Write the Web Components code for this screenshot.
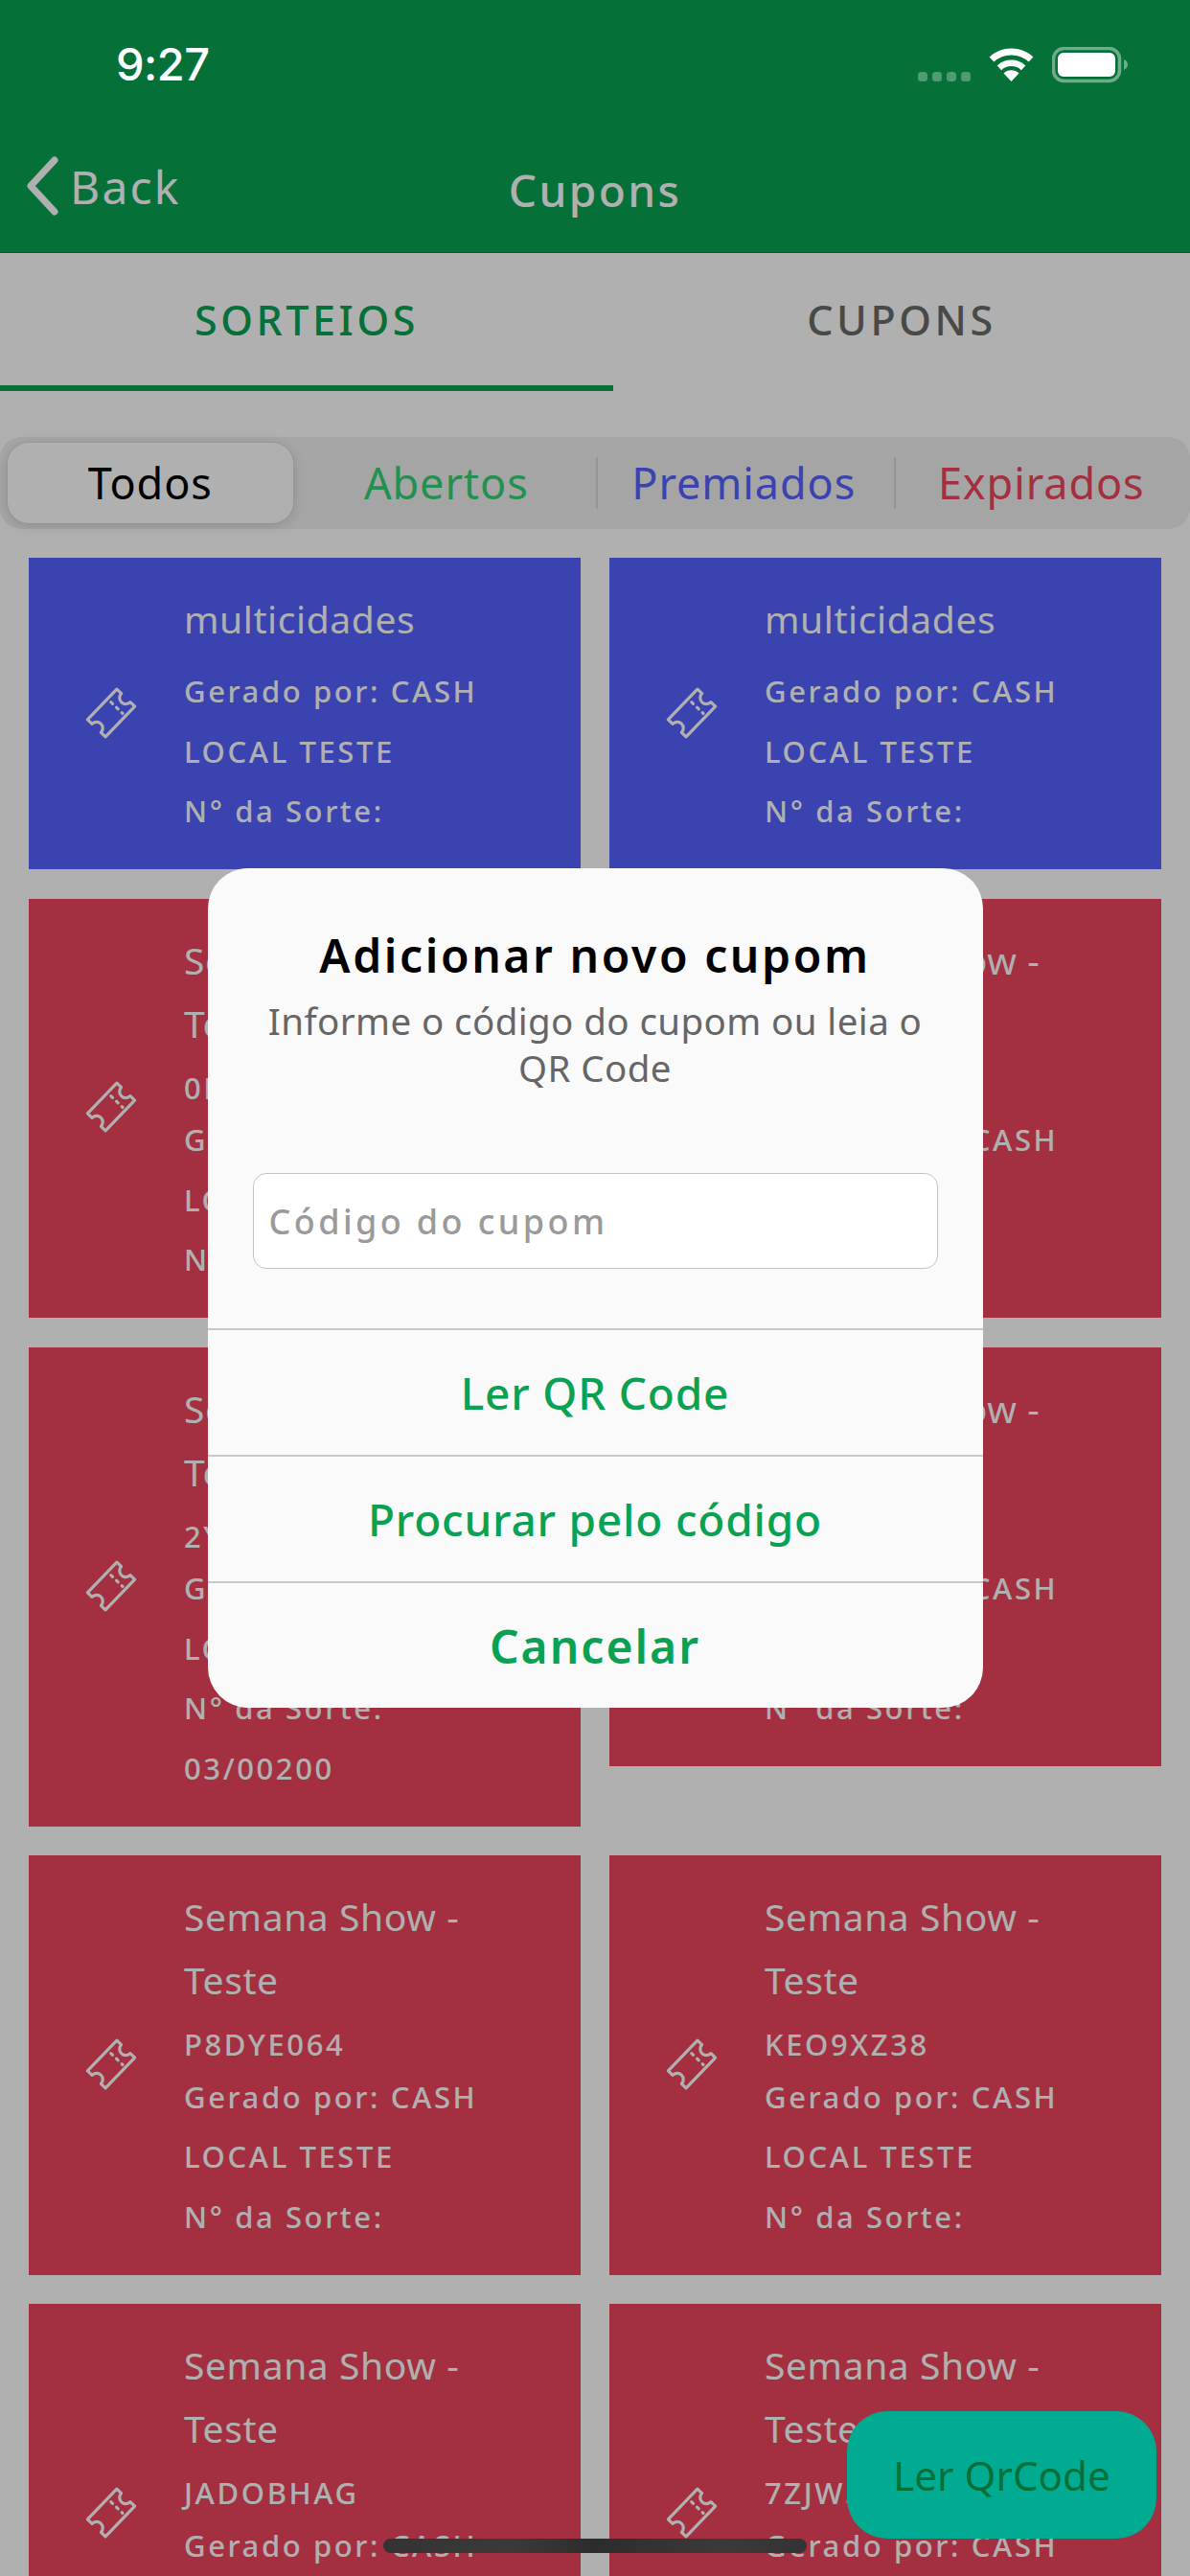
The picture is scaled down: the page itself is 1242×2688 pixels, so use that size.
<!DOCTYPE html>
<html lang="pt-BR">
<head>
<meta charset="utf-8">
<title>Cupons</title>
<style>
  html, body { margin: 0; padding: 0; background: #fff; }
  body { font-family: "Noto Sans", "Open Sans", sans-serif; }
</style>
</head>
<body>
<app-screen>
  <nav-header slot="top" title="Cupons"></nav-header>
  <top-tabs slot="top" first="SORTEIOS" second="CUPONS"></top-tabs>
  <seg-control slot="top"></seg-control>

  <card-grid slot="top">
    <coupon-card tone="blue"><span slot="title">multicidades</span><span>Gerado por: CASH</span><span>LOCAL TESTE</span><span>N° da Sorte:</span></coupon-card>
    <coupon-card tone="blue"><span slot="title">multicidades</span><span>Gerado por: CASH</span><span>LOCAL TESTE</span><span>N° da Sorte:</span></coupon-card>

    <coupon-card tone="red"><span slot="title">Semana Show - Teste</span><span slot="code">0K3FT7QA</span><span>Gerado por: CASH</span><span>LOCAL TESTE</span><span>N° da Sorte:</span></coupon-card>
    <coupon-card tone="red"><span slot="title">Semana Show - Teste</span><span slot="code">M4RT2WLC</span><span>Gerado por: CASH</span><span>LOCAL TESTE</span><span>N° da Sorte:</span></coupon-card>

    <coupon-card tone="red"><span slot="title">Semana Show - Teste</span><span slot="code">2YH8NC4D</span><span>Gerado por: CASH</span><span>LOCAL TESTE</span><span>N° da Sorte:</span><span>03/00200</span></coupon-card>
    <coupon-card tone="red"><span slot="title">Semana Show - Teste</span><span slot="code">B6SG1PVE</span><span>Gerado por: CASH</span><span>LOCAL TESTE</span><span>N° da Sorte:</span></coupon-card>

    <coupon-card tone="red"><span slot="title">Semana Show - Teste</span><span slot="code">P8DYE064</span><span>Gerado por: CASH</span><span>LOCAL TESTE</span><span>N° da Sorte:</span></coupon-card>
    <coupon-card tone="red"><span slot="title">Semana Show - Teste</span><span slot="code">KEO9XZ38</span><span>Gerado por: CASH</span><span>LOCAL TESTE</span><span>N° da Sorte:</span></coupon-card>

    <coupon-card tone="red"><span slot="title">Semana Show - Teste</span><span slot="code">JADOBHAG</span><span>Gerado por: CASH</span><span>LOCAL TESTE</span><span>N° da Sorte:</span></coupon-card>
    <coupon-card tone="red"><span slot="title">Semana Show - Teste</span><span slot="code">7ZJW5RKU</span><span>Gerado por: CASH</span><span>LOCAL TESTE</span><span>N° da Sorte:</span></coupon-card>
  </card-grid>

  <alert-dialog slot="scrim">
    <span slot="title">Adicionar novo cupom</span>
    <span slot="message">Informe o código do cupom ou leia o QR Code</span>
    <span slot="placeholder">Código do cupom</span>
    <dialog-action>Ler QR Code</dialog-action>
    <dialog-action>Procurar pelo código</dialog-action>
    <dialog-action strong>Cancelar</dialog-action>
  </alert-dialog>

  <status-bar slot="over"></status-bar>
  <qr-button slot="over">Ler QrCode</qr-button>
  <home-bar slot="over"></home-bar>
</app-screen>

<script>
const FONT = '"Noto Sans", "Open Sans", sans-serif';

function define(name, css, html, extra) {
  class El extends HTMLElement {
    constructor() {
      super();
      const root = this.attachShadow({ mode: 'open' });
      root.innerHTML = `<style>${css}</style>${typeof html === 'function' ? html(this) : html}`;
    }
    connectedCallback() { if (extra) extra(this); }
  }
  customElements.define(name, El);
}

define('app-screen', `
  :host { display: block; position: relative; width: 1242px; height: 2688px; overflow: hidden;
          background: #fff; font-family: ${FONT}; }
  .scrim { position: absolute; inset: 0; background: rgba(0,0,0,.31);
           display: flex; align-items: center; justify-content: center; }
`, `<slot name="top"></slot><div class="scrim"><slot name="scrim"></slot></div><slot name="over"></slot>`);

define('status-bar', `
  :host { position: absolute; left: 0; top: 0; width: 1242px; height: 100px; display: flex;
          align-items: flex-start; color: #fff; box-sizing: border-box; }
  .time { position: absolute; left: 121px; top: 38px; font: 500 47px/58px Inter, sans-serif; letter-spacing: -.5px; }
  .icons { position: absolute; left: 958px; top: 49px; display: flex; align-items: flex-start; }
  .dots { display: flex; gap: 5px; margin-top: 26px; margin-right: 19px; }
  .dots i { width: 10px; height: 10px; border-radius: 3.5px; background: rgba(255,255,255,.3); }
  svg { display: block; }
`, `<div class="time">9:27</div>
  <div class="icons">
    <div class="dots"><i></i><i></i><i></i><i></i></div>
    <svg width="47" height="36" viewBox="0 0 47 36" fill="none" stroke="#fff">
      <path d="M3 13 A30 30 0 0 1 44 13" stroke-width="7"/>
      <path d="M10.9 21.8 A18.5 18.5 0 0 1 36.1 21.8" stroke-width="6.5"/>
      <path d="M23.5 36 L15.5 27.6 A11.5 11.5 0 0 1 31.5 27.6 Z" fill="#fff" stroke="none"/>
    </svg>
    <svg style="margin-left:19px" width="80" height="38" viewBox="0 0 80 38" fill="none">
      <rect x="1.5" y="1.5" width="69" height="34" rx="11" stroke="#fff" stroke-opacity=".42" stroke-width="3.5"/>
      <rect x="6" y="6" width="60" height="25" rx="6" fill="#fff"/>
      <path d="M75 13 C78 14.5 79 16.5 79 18.5 C79 20.5 78 22.5 75 24 Z" fill="#fff" fill-opacity=".42"/>
    </svg>
  </div>`);

define('nav-header', `
  :host { display: grid; grid-template-columns: 1fr auto 1fr; align-items: center; box-sizing: border-box;
          height: 264px; padding: 134px 0 0; background: #09a253; color: #fff; border-bottom: 1px solid rgba(0,0,0,.25); }
  .back { display: flex; align-items: center; padding-left: 26px; gap: 11px; font-size: 48px; letter-spacing: 2.2px; margin-top: -9px; }
  .title { font-size: 46px; letter-spacing: 2.4px; font-weight: 500; margin-top: -2px; }
  svg { display: block; }
`, el => `<div class="back"><svg width="36" height="62" viewBox="0 0 36 62" fill="none"><path d="M31 4 L6 31 L31 58" stroke="#fff" stroke-width="7" stroke-linecap="round" stroke-linejoin="round"/></svg><span>Back</span></div><div class="title">${el.getAttribute('title')}</div><div></div>`);

define('top-tabs', `
  :host { display: flex; height: 144px; background: #fff; }
  .t { display: flex; align-items: center; justify-content: center; box-sizing: border-box; font-size: 43px;
       letter-spacing: 3.6px; font-weight: 500; padding-top: 1px; }
  .a { flex: 0 0 640px; color: #09a253; border-bottom: 6px solid #09a253; }
  .b { flex: 1; color: #6b6b6b; border-bottom: 6px solid transparent; }
`, el => `<div class="t a">${el.getAttribute('first')}</div><div class="t b">${el.getAttribute('second')}</div>`);

define('seg-control', `
  :host { display: block; background: #fff; padding: 48px 0 0; }
  .wrap { display: grid; grid-template-columns: repeat(4, 310.5px); box-sizing: border-box;
          width: 1242px; height: 96px; border-radius: 22px; background: #f0f0f0; align-items: center; }
  .i { height: 84px; display: flex; align-items: center; justify-content: center; font-size: 45px; letter-spacing: .9px; position: relative; }
  .i span { margin-top: -2px; }
  .sel { margin-left: 8px; margin-right: 5px; border-radius: 22px; background: #fff; color: #000;
         box-shadow: 0 2px 14px rgba(0,0,0,.14), 0 0 0 1px rgba(0,0,0,.03); }
  .g { color: #32d274; } .b { color: #5461ff; } .r { color: #ec455d; }
  .d::after { content: ""; position: absolute; right: -3px; top: 15px; bottom: 15px; width: 2px; background: #d8d8d8; }
`, `<div class="wrap">
    <div class="i sel"><span>Todos</span></div>
    <div class="i g d"><span>Abertos</span></div>
    <div class="i b d"><span>Premiados</span></div>
    <div class="i r"><span>Expirados</span></div>
  </div>`);

define('card-grid', `
  :host { display: grid; grid-template-columns: 576px 576px; column-gap: 30px; row-gap: 30.5px; align-items: start;
          background: #fff; padding: 30px 30px 0; height: 2136px; box-sizing: border-box; overflow: hidden; }
`, `<slot></slot>`);

define('ticket-icon', `
  :host { display: block; width: 60px; height: 60px; }
  svg { display: block; }
`, `<svg width="60" height="60" viewBox="0 0 60 60" fill="none" stroke="#fff" stroke-width="3.2" stroke-linejoin="round" stroke-linecap="round">
    <g transform="translate(30 30) rotate(-46)">
      <path d="M-22 -13 H22 V-6.5 A6.5 6.5 0 0 0 22 6.5 V13 H-22 V6.5 A6.5 6.5 0 0 0 -22 -6.5 Z"/>
      <path d="M8 -8 V9" stroke-dasharray="2.4 5.5"/>
    </g>
  </svg>`);

define('coupon-card', `
  :host { display: flex; align-items: center; color: #fff; background: #ec455d; box-sizing: border-box; }
  :host([tone="blue"]) { background: #5461ff; }
  .ico { flex: 0 0 162px; display: flex; justify-content: center; box-sizing: border-box; padding-left: 13px; }
  .ico ticket-icon { margin-left: -3px; margin-top: -2px; }
  .body { flex: 1; min-width: 0; padding: 31px 36px 29.5px 0; }
  .title { font-size: 39px; line-height: 66px; letter-spacing: .6px; margin-bottom: 11px; }
  .code { display: block; font-size: 31px; line-height: 46.5px; letter-spacing: 2.6px; font-weight: 500; }
  ::slotted(span:not([slot])) { display: block; font-size: 31px; line-height: 62.5px; letter-spacing: 2.6px; font-weight: 500; white-space: nowrap; }
`, `<div class="ico"><ticket-icon></ticket-icon></div>
  <div class="body">
    <div class="title"><slot name="title"></slot></div>
    <div class="code"><slot name="code"></slot></div>
    <slot></slot>
  </div>`, el => {
    if (!el.querySelector('[slot="code"]')) {
      el.shadowRoot.querySelector('.code').style.display = 'none';
    }
  });

define('alert-dialog', `
  :host { display: block; width: 809px; height: 876px; background: #fafafa; border-radius: 42px; overflow: hidden; }
  .head { height: 318px; box-sizing: border-box; padding-top: 60px; text-align: center; }
  .t { font-size: 48px; line-height: 62px; font-weight: 600; color: #000; letter-spacing: 2.6px; }
  .m { margin: 13px 36px 0; font-size: 38.5px; line-height: 49px; color: #666; letter-spacing: .4px; }
  .field { margin: 0 47px; height: 100px; box-sizing: border-box; border: 1.5px solid #c4c4c4; border-radius: 14px;
           background: #fff; display: flex; align-items: center; padding: 0 16px; color: #9a9a9a;
           font-size: 36px; letter-spacing: 3.4px; font-weight: 500; }
  .gap { height: 62px; }
`, `<div class="head">
    <div class="t"><slot name="title"></slot></div>
    <div class="m"><slot name="message"></slot></div>
  </div>
  <div class="field" role="textbox"><slot name="placeholder"></slot></div>
  <div class="gap"></div>
  <slot></slot>`);

define('dialog-action', `
  :host { display: flex; align-items: center; justify-content: center; height: 132px; box-sizing: border-box;
          border-top: 2px solid #c8c8c8; color: #09a253; font-size: 46px; font-weight: 500; letter-spacing: .8px; }
  :host([strong]) { font-size: 48px; font-weight: 600; letter-spacing: 2px; }
`, `<slot></slot>`);

define('qr-button', `
  :host { position: absolute; left: 884px; top: 2516px; width: 323px; height: 133px; border-radius: 42px;
          background: #00ab92; color: #067038; display: flex; align-items: center; justify-content: center;
          font-size: 42px; letter-spacing: .1px; }
`, `<slot></slot>`);

define('home-bar', `
  :host { position: absolute; left: 400px; top: 2649px; width: 442px; height: 15px; border-radius: 8px;
          background: linear-gradient(90deg,#333 0%,#3a3a3a 30%,#2c2c2c 50%,#3a3a3a 80%,#333 100%); }
`, ``);
</script>
</body>
</html>
